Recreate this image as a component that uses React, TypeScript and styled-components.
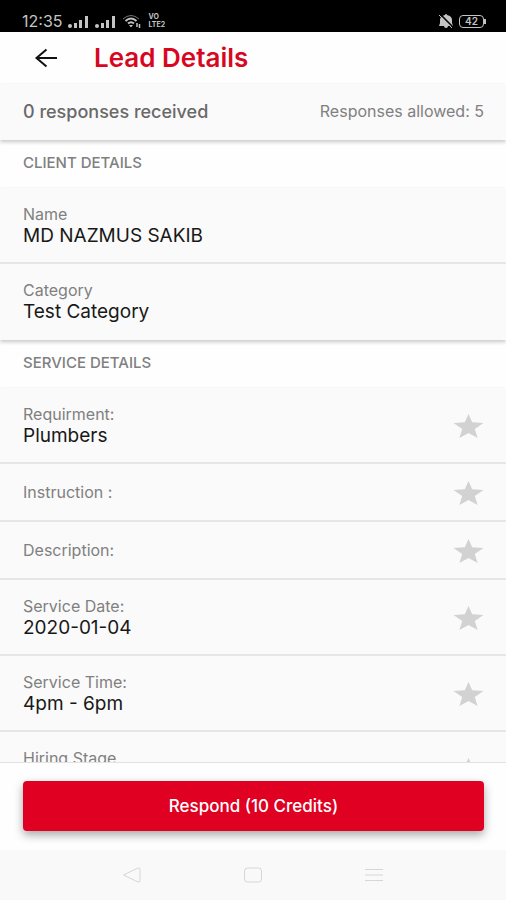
import React from "react";
import styled, { createGlobalStyle } from "styled-components";

const GlobalStyle = createGlobalStyle`
  *, *::before, *::after { box-sizing: border-box; }
  body { margin: 0; background: #fefefe; font-family: Inter, Roboto, sans-serif; }
  button { font-family: inherit; }
`;

const Screen = styled.div`
  display: flex;
  flex-direction: column;
  height: 100vh;
  overflow: hidden;
  background: #fefefe;
`;

const StatusBar = styled.div`
  display: flex;
  flex: none;
  justify-content: space-between;
  align-items: flex-end;
  height: 32px;
  padding: 0 22px 2px;
  background: #000;
  color: #c4c4c4;
  font-size: 16px;
  line-height: 18px;
`;

const StatusGroup = styled.div`
  display: flex;
  align-items: center;
  gap: 6px;
  height: 18px;
`;

const AppBar = styled.header`
  display: flex;
  flex: none;
  align-items: center;
  gap: 34px;
  height: 52px;
  padding: 0 32px;
`;

const BackButton = styled.button`
  display: flex;
  padding: 0;
  border: 0;
  background: none;
  color: #111;
  cursor: pointer;
`;

const Title = styled.h1`
  margin: 0;
  color: #d8071f;
  font-size: 26px;
  font-weight: 600;
  line-height: 32px;
`;

const Summary = styled.div`
  display: flex;
  flex: none;
  justify-content: space-between;
  align-items: center;
  height: 56px;
  padding: 0 22px 2px 23px;
  background: #fafafa;
  box-shadow: 0 2px 4px rgba(0, 0, 0, 0.22);
`;

const ResponseCount = styled.span`
  color: #696969;
  font-size: 18px;
  font-weight: 500;
`;

const ResponseLimit = styled.span`
  color: #808080;
  font-size: 16px;
`;

const Details = styled.main`
  flex: 1;
  min-height: 0;
  overflow: hidden;
`;

const SectionTitle = styled.h2`
  margin: 0;
  padding: 0 23px 2px;
  color: #808080;
  font-size: 15px;
  font-weight: 500;
  line-height: 46px;
`;

const Card = styled.dl`
  margin: 0;
  background: #fafafa;
  box-shadow: 0 2px 4px rgba(0, 0, 0, 0.22);
`;

const Row = styled.div<{ $compact: boolean }>`
  display: flex;
  justify-content: space-between;
  align-items: center;
  min-height: ${(p) => (p.$compact ? 58 : 76)}px;
  padding: 0 22px 0 23px;
  border-bottom: 2px solid #e6e6e6;

  &:last-child { border-bottom-color: transparent; }
`;

const FieldText = styled.div`
  min-width: 0;
`;

const Label = styled.dt`
  color: #808080;
  font-size: 16px;
  line-height: 22px;
`;

const Value = styled.dd`
  margin: 0;
  color: #181818;
  font-size: 19px;
  line-height: 22px;
`;

const StarButton = styled.button`
  display: flex;
  padding: 2px 0 0;
  border: 0;
  background: none;
  color: #d2d2d2;
  cursor: pointer;
`;

const Footer = styled.footer`
  flex: none;
  padding: 18px 22px 19px 23px;
  border-top: 1px solid #e2e2e2;
`;

const RespondButton = styled.button`
  display: block;
  width: 100%;
  height: 50px;
  border: 0;
  border-radius: 4px;
  background: #df0022;
  box-shadow: 0 4px 10px rgba(0, 0, 0, 0.34);
  color: #fff;
  font-size: 17px;
  font-weight: 500;
  cursor: pointer;
`;

const SystemNav = styled.nav`
  display: flex;
  flex: none;
  justify-content: center;
  gap: 101px;
  align-items: center;
  height: 50px;
  background: #f9f9f9;
`;

const NavButton = styled.button`
  display: flex;
  padding: 0;
  border: 0;
  background: none;
  color: #d6d6d6;
`;

const SignalIcon = () => (
  <svg width="21" height="13" viewBox="0 0 21 13" fill="currentColor" aria-hidden="true">
    <circle cx="2" cy="11" r="2" />
    <rect x="6" y="8" width="3" height="5" />
    <rect x="11" y="5" width="3" height="8" />
    <rect x="17" y="1" width="3" height="12" />
  </svg>
);

const WifiIcon = () => (
  <svg width="20" height="14" viewBox="0 0 20 14" fill="none" stroke="currentColor" aria-hidden="true">
    <path d="M1 5Q9 -2 17 5" strokeWidth="1" opacity=".6" />
    <path d="M3.5 7Q9 2 14.5 7" strokeWidth="2" />
    <path d="M6 9.5Q9 7 12 9.5" strokeWidth="2" />
    <path d="M7 11h4l-2 2.5z" fill="currentColor" stroke="none" />
    <path d="M15 9v4M17.5 10v4" strokeWidth="1.5" />
  </svg>
);

const VolteMark = styled.span`
  display: flex;
  flex-direction: column;
  font-size: 7px;
  font-weight: 700;
  line-height: 8px;
`;

const MutedBellIcon = () => (
  <svg width="14" height="14" viewBox="0 0 14 14" aria-hidden="true">
    <path d="M7 0q1 0 1 1Q13 2 13 6v3l1 3H0l1-3V6Q1 2 6 1q0-1 1-1zM5 12h4q0 2-2 2t-2-2z" fill="currentColor" />
    <path d="M1 0l13 13" stroke="#000" strokeWidth="1.5" />
    <path d="M0 1l13 13" stroke="currentColor" strokeWidth="1" />
  </svg>
);

const Battery = styled.span`
  position: relative;
  width: 25px;
  height: 13px;
  border: 1px solid #c4c4c4;
  border-radius: 4px;
  font-size: 10px;
  font-weight: 600;
  line-height: 11px;
  text-align: center;

  &::after {
    content: "";
    position: absolute;
    top: 3px;
    right: -3px;
    width: 2px;
    height: 5px;
    background: currentColor;
  }
`;

const BackArrow = () => (
  <svg width="28" height="24" viewBox="0 0 28 24" fill="none" stroke="currentColor" strokeWidth="2" aria-hidden="true">
    <path d="M25 12H4M14.5 3.5L4.5 12l10 8.5" />
  </svg>
);

const Star = () => (
  <svg width="31" height="26" viewBox="0 0 31 26" fill="currentColor" aria-hidden="true">
    <path d="M15.5 1l3.7 8.2 11.3.8-8.7 6 2.8 9-9.1-4.9L6.4 25l2.8-9L.5 10l11.3-.8z" />
  </svg>
);

type Field = { label: string; value?: string };

const clientFields: Field[] = [
  { label: "Name", value: "MD NAZMUS SAKIB" },
  { label: "Category", value: "Test Category" },
];

const serviceFields: Field[] = [
  { label: "Requirment:", value: "Plumbers" },
  { label: "Instruction :" },
  { label: "Description:" },
  { label: "Service Date:", value: "2020-01-04" },
  { label: "Service Time:", value: "4pm - 6pm" },
  { label: "Hiring Stage", value: "" },
];

function FieldList({ fields, starred = false }: { fields: Field[]; starred?: boolean }) {
  return (
    <Card>
      {fields.map(({ label, value }) => {
        const compact = value === undefined;
        return (
          <Row key={label} $compact={compact}>
            <FieldText>
              <Label>{label}</Label>
              {!compact && <Value>{value || "\u00a0"}</Value>}
            </FieldText>
            {starred && (
              <StarButton type="button" aria-label={`Star ${label}`}>
                <Star />
              </StarButton>
            )}
          </Row>
        );
      })}
    </Card>
  );
}

export default function App() {
  return (
    <>
      <GlobalStyle />
      <Screen>
        <StatusBar>
          <StatusGroup>
            <span>12:35</span>
            <SignalIcon />
            <SignalIcon />
            <WifiIcon />
            <VolteMark>
              <span>VO</span>
              <span>LTE2</span>
            </VolteMark>
          </StatusGroup>
          <StatusGroup>
            <MutedBellIcon />
            <Battery>42</Battery>
          </StatusGroup>
        </StatusBar>
        <AppBar>
          <BackButton type="button" aria-label="Back">
            <BackArrow />
          </BackButton>
          <Title>Lead Details</Title>
        </AppBar>
        <Summary>
          <ResponseCount>0 responses received</ResponseCount>
          <ResponseLimit>Responses allowed: 5</ResponseLimit>
        </Summary>
        <Details>
          <SectionTitle>CLIENT DETAILS</SectionTitle>
          <FieldList fields={clientFields} />
          <SectionTitle>SERVICE DETAILS</SectionTitle>
          <FieldList fields={serviceFields} starred />
        </Details>
        <Footer>
          <RespondButton type="button">Respond (10 Credits)</RespondButton>
        </Footer>
        <SystemNav aria-label="System">
          <NavButton type="button" aria-label="Go back">
            <svg width="20" height="18" viewBox="0 0 20 18" fill="none" stroke="currentColor" aria-hidden="true">
              <path d="M1.5 9L16 2q2-.5 2 1.5v11q0 2-2 1.5z" />
            </svg>
          </NavButton>
          <NavButton type="button" aria-label="Home">
            <svg width="20" height="18" viewBox="0 0 20 18" fill="none" stroke="currentColor" aria-hidden="true">
              <rect x="1.5" y="2" width="17" height="14" rx="3" />
            </svg>
          </NavButton>
          <NavButton type="button" aria-label="Recent apps">
            <svg width="20" height="18" viewBox="0 0 20 18" fill="none" stroke="currentColor" aria-hidden="true">
              <path d="M1 3.5h18M1 9h18M1 14.5h18" />
            </svg>
          </NavButton>
        </SystemNav>
      </Screen>
    </>
  );
}
